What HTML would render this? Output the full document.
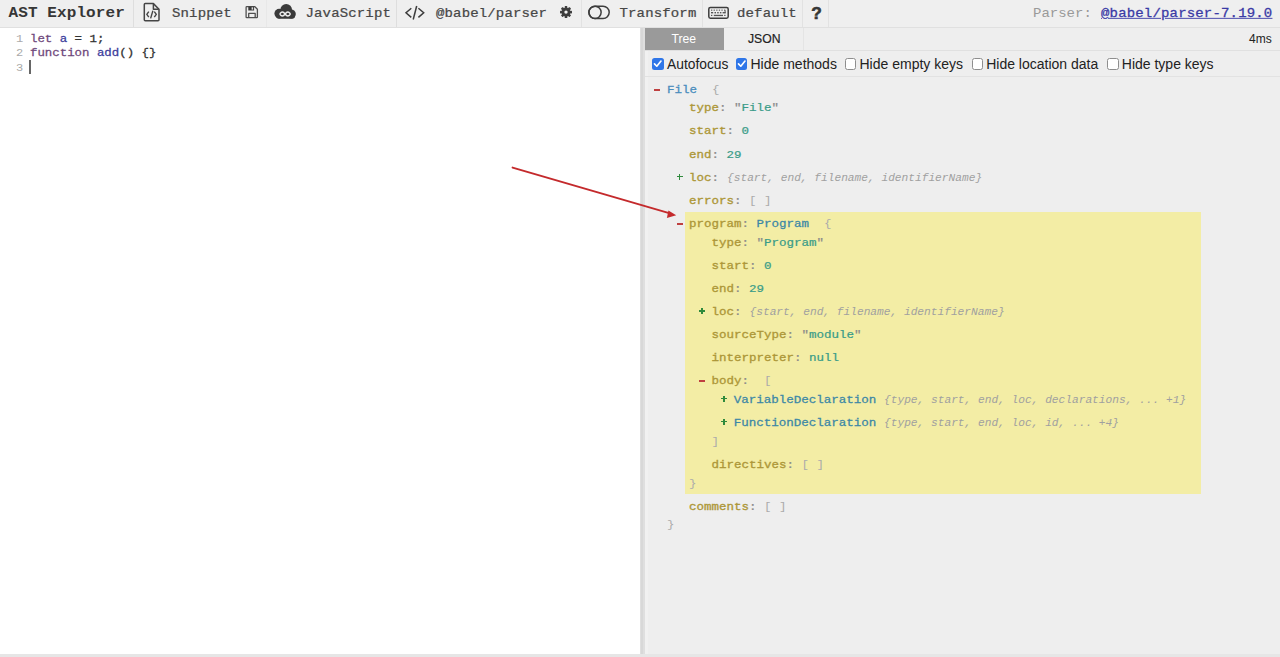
<!DOCTYPE html>
<html><head><meta charset="utf-8">
<style>
*{margin:0;padding:0;box-sizing:border-box}
html,body{width:1280px;height:657px;overflow:hidden;background:#fff;font-family:"Liberation Sans",sans-serif}
.a{position:absolute;white-space:pre}
.m{font-family:"Liberation Mono",monospace}
.s{font-family:"Liberation Sans",sans-serif}
.k{color:#ad9738;-webkit-text-stroke-width:0.35px}
.c{color:#8a8a8a;-webkit-text-stroke-width:0.25px}
.v{color:#3a9c88;-webkit-text-stroke-width:0.25px}
.t{color:#4a8dbd;-webkit-text-stroke-width:0.3px}
.b{color:#ababab}
.i{color:#a0a0a0;font-style:italic}
</style></head><body>

<div class="a" style="left:0;top:0;width:1280px;height:27px;background:#efefef"></div>
<div class="a" style="left:0;top:27px;width:1280px;height:1px;background:#e0e0e0"></div>
<div class="a" style="left:133px;top:0;width:1px;height:27px;background:#dedede"></div>
<div class="a" style="left:266px;top:0;width:1px;height:27px;background:#e8e8e8"></div>
<div class="a" style="left:396px;top:0;width:1px;height:27px;background:#dedede"></div>
<div class="a" style="left:581px;top:0;width:1px;height:27px;background:#e2e2e2"></div>
<div class="a" style="left:702px;top:0;width:1px;height:27px;background:#e2e2e2"></div>
<div class="a" style="left:802px;top:0;width:1px;height:27px;background:#e2e2e2"></div>
<div class="a" style="left:828px;top:0;width:1px;height:27px;background:#e2e2e2"></div>
<div class="a" style="left:0;top:28px;width:640px;height:626px;background:#fff"></div>
<div class="a" style="left:640px;top:28px;width:5px;height:626px;background:#dfdfdf"></div>
<div class="a" style="left:640.5px;top:28px;width:2px;height:626px;background:#d8d8d8"></div>
<div class="a" style="left:645px;top:28px;width:635px;height:626px;background:#eeeeee"></div>
<div class="a" style="left:645px;top:28px;width:3px;height:626px;background:#f1f1f1"></div>
<div class="a" style="left:0;top:654px;width:1280px;height:3px;background:#e6e6e6"></div>
<div class="a" style="left:645px;top:50px;width:635px;height:1px;background:#e0e0e0"></div>
<div class="a" style="left:803px;top:28px;width:1px;height:22px;background:#e4e4e4"></div>
<div class="a" style="left:645px;top:76px;width:635px;height:1px;background:#e2e2e2"></div>
<div class="a" style="left:645px;top:28px;width:79px;height:22px;background:#9a9a9a"></div>
<div class="a" style="left:685px;top:212px;width:516px;height:282px;background:#f3eda5"></div>
<div class="a m" style="left:8.50px;top:4.94px;font-size:16px;line-height:16px;color:#363636;transform:scaleY(0.9);transform-origin:0 12.26px;font-weight:bold;letter-spacing:0.1px">AST Explorer</div>
<div class="a m" style="left:172.00px;top:6.47px;font-size:14px;line-height:14px;color:#474747;transform:scaleY(0.9);transform-origin:0 10.73px;-webkit-text-stroke:0.25px #474747;letter-spacing:0.15px;">Snippet</div>
<div class="a m" style="left:305.50px;top:6.47px;font-size:14px;line-height:14px;color:#474747;transform:scaleY(0.9);transform-origin:0 10.73px;-webkit-text-stroke:0.25px #474747;letter-spacing:0.15px;">JavaScript</div>
<div class="a m" style="left:436.00px;top:6.47px;font-size:14px;line-height:14px;color:#474747;transform:scaleY(0.9);transform-origin:0 10.73px;-webkit-text-stroke:0.25px #474747;letter-spacing:0.15px;">@babel/parser</div>
<div class="a m" style="left:619.50px;top:6.47px;font-size:14px;line-height:14px;color:#474747;transform:scaleY(0.9);transform-origin:0 10.73px;-webkit-text-stroke:0.25px #474747;letter-spacing:0.15px;">Transform</div>
<div class="a m" style="left:737.00px;top:6.47px;font-size:14px;line-height:14px;color:#474747;transform:scaleY(0.9);transform-origin:0 10.73px;-webkit-text-stroke:0.25px #474747;letter-spacing:0.15px;">default</div>
<div class="a s" style="left:811.20px;top:5.25px;font-size:17.3px;line-height:17.3px;color:#363636;font-weight:bold;-webkit-text-stroke:0.6px #363636">?</div>
<div class="a m" style="left:1033.00px;top:6.27px;font-size:14px;line-height:14px;color:#999;transform:scaleY(0.9);transform-origin:0 10.73px;">Parser: </div>
<div class="a m" style="left:1101.00px;top:6.27px;font-size:14px;line-height:14px;color:#3a3aa6;transform:scaleY(0.9);transform-origin:0 10.73px;text-decoration:underline;letter-spacing:0.17px;-webkit-text-stroke-width:0.3px">@babel/parser-7.19.0</div>
<div class="a m" style="left:16.00px;top:33.11px;font-size:12px;line-height:12px;color:#aaa;transform:scaleY(0.9);transform-origin:0 9.19px;">1</div>
<div class="a m" style="left:16.00px;top:47.31px;font-size:12px;line-height:12px;color:#aaa;transform:scaleY(0.9);transform-origin:0 9.19px;">2</div>
<div class="a m" style="left:16.00px;top:61.51px;font-size:12px;line-height:12px;color:#aaa;transform:scaleY(0.9);transform-origin:0 9.19px;">3</div>
<div class="a m" style="left:30.00px;top:32.80px;font-size:12.4px;line-height:12.4px;color:#333;transform:scaleY(0.9);transform-origin:0 9.50px;-webkit-text-stroke-width:0.3px;"><span style="color:#70497c">let</span> <span style="color:#3d3d9c">a</span> = 1;</div>
<div class="a m" style="left:30.00px;top:47.00px;font-size:12.4px;line-height:12.4px;color:#333;transform:scaleY(0.9);transform-origin:0 9.50px;-webkit-text-stroke-width:0.3px;"><span style="color:#70497c">function</span> <span style="color:#3d3d9c">add</span>() {}</div>
<div class="a" style="left:29.4px;top:60px;width:1.4px;height:14px;background:#666"></div><div class="a s" style="left:671.50px;top:32.67px;font-size:12.2px;line-height:12.2px;color:#fff;">Tree</div>
<div class="a s" style="left:748.00px;top:32.67px;font-size:12.2px;line-height:12.2px;color:#222;-webkit-text-stroke-width:0.2px">JSON</div>
<div class="a s" style="left:1249.00px;top:33.04px;font-size:12px;line-height:12px;color:#222;">4ms</div>
<div class="a" style="left:652px;top:58px;width:11.5px;height:11.5px;border-radius:2.5px;background:#2f76e8"><svg width="11.5" height="11.5" viewBox="0 0 12 12" style="position:absolute;left:0;top:0"><path d="M2.6 6.2 L5 8.6 L9.4 3.2" fill="none" stroke="#fff" stroke-width="1.7" stroke-linecap="round" stroke-linejoin="round"/></svg></div><div class="a s" style="left:667.00px;top:57.62px;font-size:13.8px;line-height:13.8px;color:#222;">Autofocus</div>
<div class="a" style="left:735.8px;top:58px;width:11.5px;height:11.5px;border-radius:2.5px;background:#2f76e8"><svg width="11.5" height="11.5" viewBox="0 0 12 12" style="position:absolute;left:0;top:0"><path d="M2.6 6.2 L5 8.6 L9.4 3.2" fill="none" stroke="#fff" stroke-width="1.7" stroke-linecap="round" stroke-linejoin="round"/></svg></div><div class="a s" style="left:750.50px;top:57.45px;font-size:14px;line-height:14px;color:#222;">Hide methods</div>
<div class="a" style="left:844.5px;top:58px;width:11.5px;height:11.5px;border-radius:2.5px;background:#fff;border:1px solid #8e8e8e"></div><div class="a s" style="left:859.50px;top:57.45px;font-size:14px;line-height:14px;color:#222;">Hide empty keys</div>
<div class="a" style="left:971.5px;top:58px;width:11.5px;height:11.5px;border-radius:2.5px;background:#fff;border:1px solid #8e8e8e"></div><div class="a s" style="left:986.20px;top:57.45px;font-size:14px;line-height:14px;color:#222;">Hide location data</div>
<div class="a" style="left:1107px;top:58px;width:11.5px;height:11.5px;border-radius:2.5px;background:#fff;border:1px solid #8e8e8e"></div><div class="a s" style="left:1121.80px;top:57.45px;font-size:14px;line-height:14px;color:#222;">Hide type keys</div>
<div class="a" style="left:654.30px;top:88.90px;width:5.8px;height:2px;background:#bf4040"></div><div class="a m" style="left:667.00px;top:83.82px;font-size:12.5px;line-height:12.5px;color:#333;transform:scaleY(0.9);transform-origin:0 9.58px;"><span class="t">File</span>  <span class="b">{</span></div>
<div class="a m" style="left:689.00px;top:102.12px;font-size:12.5px;line-height:12.5px;color:#333;transform:scaleY(0.9);transform-origin:0 9.58px;"><span class="k">type</span><span class="c">:</span> <span class="c">"</span><span class="v">File</span><span class="c">"</span></div>
<div class="a m" style="left:689.00px;top:125.32px;font-size:12.5px;line-height:12.5px;color:#333;transform:scaleY(0.9);transform-origin:0 9.58px;"><span class="k">start</span><span class="c">:</span> <span class="v">0</span></div>
<div class="a m" style="left:689.00px;top:148.52px;font-size:12.5px;line-height:12.5px;color:#333;transform:scaleY(0.9);transform-origin:0 9.58px;"><span class="k">end</span><span class="c">:</span> <span class="v">29</span></div>
<div class="a" style="left:676.60px;top:175.90px;width:6.4px;height:1.6px;background:#2f8a3c"></div><div class="a" style="left:678.90px;top:173.70px;width:1.6px;height:6.2px;background:#2f8a3c"></div><div class="a m" style="left:689.00px;top:171.72px;font-size:12.5px;line-height:12.5px;color:#333;transform:scaleY(0.9);transform-origin:0 9.58px;"><span class="k">loc</span><span class="c">:</span> </div>
<div class="a m" style="left:727.00px;top:172.72px;font-size:11.2px;line-height:11.2px;color:#333;transform:scaleY(0.9);transform-origin:0 8.58px;"><span class="i">{start, end, filename, identifierName}</span></div>
<div class="a m" style="left:689.00px;top:194.82px;font-size:12.5px;line-height:12.5px;color:#333;transform:scaleY(0.9);transform-origin:0 9.58px;"><span class="k">errors</span><span class="c">:</span> <span class="b">[ ]</span></div>
<div class="a" style="left:676.80px;top:223.00px;width:5.8px;height:2px;background:#bf4040"></div><div class="a m" style="left:689.00px;top:217.92px;font-size:12.5px;line-height:12.5px;color:#333;transform:scaleY(0.9);transform-origin:0 9.58px;"><span class="k">program</span><span class="c">:</span> <span class="t" style="color:#3d88a6">Program</span>  <span class="b">{</span></div>
<div class="a m" style="left:711.50px;top:237.32px;font-size:12.5px;line-height:12.5px;color:#333;transform:scaleY(0.9);transform-origin:0 9.58px;"><span class="k">type</span><span class="c">:</span> <span class="c">"</span><span class="v">Program</span><span class="c">"</span></div>
<div class="a m" style="left:711.50px;top:260.32px;font-size:12.5px;line-height:12.5px;color:#333;transform:scaleY(0.9);transform-origin:0 9.58px;"><span class="k">start</span><span class="c">:</span> <span class="v">0</span></div>
<div class="a m" style="left:711.50px;top:283.32px;font-size:12.5px;line-height:12.5px;color:#333;transform:scaleY(0.9);transform-origin:0 9.58px;"><span class="k">end</span><span class="c">:</span> <span class="v">29</span></div>
<div class="a" style="left:699.10px;top:310.40px;width:6.4px;height:1.6px;background:#2f8a3c"></div><div class="a" style="left:701.40px;top:308.20px;width:1.6px;height:6.2px;background:#2f8a3c"></div><div class="a m" style="left:711.50px;top:306.22px;font-size:12.5px;line-height:12.5px;color:#333;transform:scaleY(0.9);transform-origin:0 9.58px;"><span class="k">loc</span><span class="c">:</span> </div>
<div class="a m" style="left:749.50px;top:307.22px;font-size:11.2px;line-height:11.2px;color:#333;transform:scaleY(0.9);transform-origin:0 8.58px;"><span class="i">{start, end, filename, identifierName}</span></div>
<div class="a m" style="left:711.50px;top:329.22px;font-size:12.5px;line-height:12.5px;color:#333;transform:scaleY(0.9);transform-origin:0 9.58px;"><span class="k">sourceType</span><span class="c">:</span> <span class="c">"</span><span class="v">module</span><span class="c">"</span></div>
<div class="a m" style="left:711.50px;top:352.02px;font-size:12.5px;line-height:12.5px;color:#333;transform:scaleY(0.9);transform-origin:0 9.58px;"><span class="k">interpreter</span><span class="c">:</span> <span class="v">null</span></div>
<div class="a" style="left:699.30px;top:380.10px;width:5.8px;height:2px;background:#bf4040"></div><div class="a m" style="left:711.50px;top:375.02px;font-size:12.5px;line-height:12.5px;color:#333;transform:scaleY(0.9);transform-origin:0 9.58px;"><span class="k">body</span><span class="c">:</span>  <span class="b">[</span></div>
<div class="a" style="left:721.10px;top:397.80px;width:6.4px;height:1.6px;background:#2f8a3c"></div><div class="a" style="left:723.40px;top:395.60px;width:1.6px;height:6.2px;background:#2f8a3c"></div><div class="a m" style="left:733.80px;top:393.62px;font-size:12.5px;line-height:12.5px;color:#333;transform:scaleY(0.9);transform-origin:0 9.58px;"><span class="t" style="color:#3d88a6">VariableDeclaration</span> </div>
<div class="a m" style="left:884.00px;top:394.62px;font-size:11.2px;line-height:11.2px;color:#333;transform:scaleY(0.9);transform-origin:0 8.58px;"><span class="i">{type, start, end, loc, declarations, ... +1}</span></div>
<div class="a" style="left:721.10px;top:420.90px;width:6.4px;height:1.6px;background:#2f8a3c"></div><div class="a" style="left:723.40px;top:418.70px;width:1.6px;height:6.2px;background:#2f8a3c"></div><div class="a m" style="left:733.80px;top:416.72px;font-size:12.5px;line-height:12.5px;color:#333;transform:scaleY(0.9);transform-origin:0 9.58px;"><span class="t" style="color:#3d88a6">FunctionDeclaration</span> </div>
<div class="a m" style="left:884.00px;top:417.72px;font-size:11.2px;line-height:11.2px;color:#333;transform:scaleY(0.9);transform-origin:0 8.58px;"><span class="i">{type, start, end, loc, id, ... +4}</span></div>
<div class="a m" style="left:711.50px;top:436.22px;font-size:12.5px;line-height:12.5px;color:#333;transform:scaleY(0.9);transform-origin:0 9.58px;"><span class="b">]</span></div>
<div class="a m" style="left:711.50px;top:458.62px;font-size:12.5px;line-height:12.5px;color:#333;transform:scaleY(0.9);transform-origin:0 9.58px;"><span class="k">directives</span><span class="c">:</span> <span class="b">[ ]</span></div>
<div class="a m" style="left:689.00px;top:478.12px;font-size:12.5px;line-height:12.5px;color:#333;transform:scaleY(0.9);transform-origin:0 9.58px;"><span class="b">}</span></div>
<div class="a m" style="left:689.00px;top:500.62px;font-size:12.5px;line-height:12.5px;color:#333;transform:scaleY(0.9);transform-origin:0 9.58px;"><span class="k">comments</span><span class="c">:</span> <span class="b">[ ]</span></div>
<div class="a m" style="left:667.00px;top:518.92px;font-size:12.5px;line-height:12.5px;color:#333;transform:scaleY(0.9);transform-origin:0 9.58px;"><span class="b">}</span></div>
<svg class="a" style="left:0;top:0" width="1280" height="27" viewBox="0 0 1280 27">
<g fill="none" stroke="#454545" stroke-width="1.5" stroke-linejoin="round">
 <path d="M144.3 4.6 Q144.3 3.6 145.3 3.6 L153.4 3.6 L159 9.2 L159 19.7 Q159 20.7 158 20.7 L145.3 20.7 Q144.3 20.7 144.3 19.7 Z"/>
 <path d="M153.4 3.8 L153.4 9.2 L158.8 9.2" stroke-width="1.5"/>
 <path d="M148.8 11.6 L146.8 14.4 L148.8 17.2" stroke-width="1.4"/>
 <path d="M154.3 11.6 L156.3 14.4 L154.3 17.2" stroke-width="1.4"/>
 <path d="M152.9 10.8 L150.6 18.4" stroke-width="1.4"/>
</g>
<g fill="none" stroke="#505050" stroke-width="1.3" stroke-linejoin="round">
 <path d="M246.1 7.4 Q246.1 6.7 246.8 6.7 L254.9 6.7 L257.4 9.2 L257.4 17 Q257.4 17.7 256.7 17.7 L246.8 17.7 Q246.1 17.7 246.1 17 Z"/>
 <path d="M248.7 17.5 L248.7 13.4 L255.2 13.4 L255.2 17.5"/>
</g>
<rect x="248.3" y="6.7" width="5.8" height="3.8" fill="#3a3a3a"/>
<rect x="251.6" y="7.3" width="1.5" height="2.3" fill="#ddd"/>
<g fill="#3a3a3a">
 <circle cx="279.2" cy="13.6" r="4.8"/>
 <circle cx="286.2" cy="9.9" r="5.9"/>
 <circle cx="291.2" cy="14" r="4.6"/>
 <rect x="276" y="12.5" width="19" height="6.3" rx="3"/>
</g>
<path d="M285.1 14 C283.8 12.2 281.9 11.9 280.9 12.6 C279.7 13.4 279.7 14.6 280.9 15.4 C281.9 16.1 283.8 15.8 285.1 14 C286.4 12.2 288.3 11.9 289.3 12.6 C290.5 13.4 290.5 14.6 289.3 15.4 C288.3 16.1 286.4 15.8 285.1 14 Z" fill="none" stroke="#efefef" stroke-width="1.4"/>
<g fill="none" stroke="#3d3d3d" stroke-width="1.5" stroke-linecap="butt" stroke-linejoin="miter">
 <path d="M411.3 8.2 L406 12.8 L411.3 17.4"/>
 <path d="M418.4 8.2 L423.7 12.8 L418.4 17.4"/>
 <path d="M416.7 6 L413.2 19.5"/>
</g>
<g transform="translate(566 12.1)" fill="#3d3d3d">
 <circle r="4.3"/>
 <g id="tooth"><rect x="-1.3" y="-6" width="2.6" height="3" rx="0.6"/></g>
 <rect x="-1.3" y="-6" width="2.6" height="3" rx="0.6" transform="rotate(45)"/>
 <rect x="-1.3" y="-6" width="2.6" height="3" rx="0.6" transform="rotate(90)"/>
 <rect x="-1.3" y="-6" width="2.6" height="3" rx="0.6" transform="rotate(135)"/>
 <rect x="-1.3" y="-6" width="2.6" height="3" rx="0.6" transform="rotate(180)"/>
 <rect x="-1.3" y="-6" width="2.6" height="3" rx="0.6" transform="rotate(225)"/>
 <rect x="-1.3" y="-6" width="2.6" height="3" rx="0.6" transform="rotate(270)"/>
 <rect x="-1.3" y="-6" width="2.6" height="3" rx="0.6" transform="rotate(315)"/>
 <circle r="1.7" fill="#f2f2f2"/>
</g>
<g fill="none" stroke="#3d3d3d" stroke-width="1.5">
 <rect x="588.9" y="6.2" width="20.3" height="12.3" rx="6.15"/>
 <circle cx="595" cy="12.35" r="6.15"/>
</g>
<g fill="none" stroke="#3d3d3d" stroke-width="1.5">
 <rect x="708.8" y="7.5" width="19.4" height="10.7" rx="1.6"/>
</g>
<g fill="#555">
 <rect x="711" y="9.6" width="1.3" height="1.1"/><rect x="713.6" y="9.6" width="1.3" height="1.1"/><rect x="716.2" y="9.6" width="1.3" height="1.1"/><rect x="718.8" y="9.6" width="1.3" height="1.1"/><rect x="721.4" y="9.6" width="1.3" height="1.1"/><rect x="724" y="9.6" width="1.3" height="1.1"/>
 <rect x="711" y="12" width="2.2" height="1.4"/><rect x="714.5" y="12" width="1.5" height="1.4"/><rect x="717.2" y="12" width="1.5" height="1.4"/><rect x="719.9" y="12" width="1.5" height="1.4"/><rect x="722.6" y="12" width="3" height="1.4"/><rect x="724.6" y="10.2" width="1" height="3"/>
 <rect x="711" y="14.8" width="1.3" height="1.2"/><rect x="713.8" y="14.8" width="9.2" height="1.3"/><rect x="724.2" y="14.8" width="1.3" height="1.2"/>
</g>
</svg><svg class="a" style="left:0;top:0" width="1280" height="657" viewBox="0 0 1280 657">
<line x1="512.6" y1="167.6" x2="670" y2="213.4" stroke="#c42a2c" stroke-width="2" stroke-linecap="round"/>
<path d="M676.2 215.3 L668.4 210.4 L666.9 218 Z" fill="#c42a2c"/>
</svg></body></html>
